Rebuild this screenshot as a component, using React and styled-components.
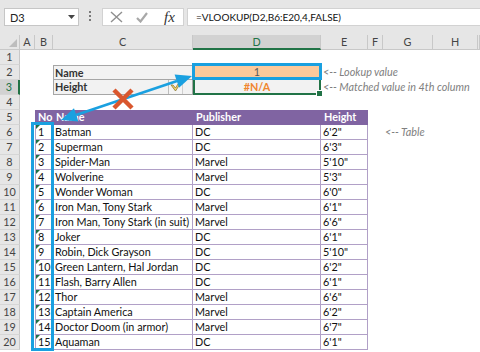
import React from 'react';
import styled, { createGlobalStyle } from 'styled-components';

const Global = createGlobalStyle`
  html, body { margin: 0; padding: 0; background: #fff; }
  body { font-family: Lato, "Liberation Sans", sans-serif; }
`;

const Root = styled.div`
  position: relative;
  width: 480px;
  height: 352px;
  overflow: hidden;
  background: #fff;
  font-family: Lato, "Liberation Sans", sans-serif;
`;

const FormulaBar = styled.div`
  height: 35px;
  box-sizing: border-box;
  padding: 8px 0 0 4px;
  background: #e6e6e6;
  display: flex;
  align-items: flex-start;
`;

const NameBox = styled.div`
  width: 75px;
  height: 18px;
  box-sizing: border-box;
  background: #fff;
  border: 1px solid #c6c6c6;
  display: flex;
  align-items: center;
  justify-content: space-between;
  padding: 0 3px 0 5px;
  font-size: 11px;
  color: #222;
`;

const Dots = styled.div`
  width: 3px;
  margin: 3px 10px 0 10px;
  display: flex;
  flex-direction: column;
  gap: 2px;
  span {
    width: 2px;
    height: 2px;
    background: #7a7a7a;
  }
`;

const IconBox = styled.div`
  width: 82px;
  height: 18px;
  box-sizing: border-box;
  background: #fff;
  border: 1px solid #d2d2d2;
  display: flex;
  align-items: center;
  padding-left: 7px;
  gap: 13px;
`;

const Fx = styled.span`
  font-family: "Liberation Serif", serif;
  font-style: italic;
  font-size: 15px;
  color: #333;
  margin-left: 3px;
  line-height: 16px;
`;

const FormulaInput = styled.div`
  flex: 1;
  height: 18px;
  margin-left: 3px;
  box-sizing: border-box;
  background: #fff;
  border: 1px solid #d2d2d2;
  border-right: none;
  font-size: 10px;
  color: #111;
  padding-left: 8px;
  line-height: 16px;
  white-space: nowrap;
`;

const Sheet = styled.div`
  display: grid;
  grid-template-columns: 20px 15px 18px 140px 128px 47px 15px 50px 45px 1fr;
  grid-template-rows: repeat(21, 15px);
  font-size: 10.8px;
`;

const Corner = styled.div`
  grid-row: 1;
  grid-column: 1;
  background: #e6e6e6;
  border-right: 1px solid #c8c8c8;
  border-bottom: 1px solid #c8c8c8;
  box-sizing: border-box;
  display: flex;
  align-items: flex-end;
  justify-content: flex-end;
  padding: 0 2px 2px 0;
`;

const ColHead = styled.div`
  grid-row: 1;
  grid-column: ${(p) => p.$col};
  background: ${(p) => (p.$active ? '#d2d2d2' : '#e6e6e6')};
  color: ${(p) => (p.$active ? '#217346' : '#444')};
  border-right: 1px solid #c8c8c8;
  border-bottom: ${(p) => (p.$active ? '2px solid #217346' : '1px solid #c8c8c8')};
  box-sizing: border-box;
  text-align: center;
  line-height: 14px;
`;

const RowHead = styled.div`
  grid-row: ${(p) => p.$row + 1};
  grid-column: 1;
  background: ${(p) => (p.$active ? '#d2d2d2' : '#e6e6e6')};
  color: ${(p) => (p.$active ? '#217346' : '#444')};
  border-right: ${(p) => (p.$active ? '2px solid #217346' : '1px solid #c8c8c8')};
  border-bottom: 1px solid #d6d6d6;
  box-sizing: border-box;
  text-align: center;
  line-height: 14px;
`;

const LabelCell = styled.div`
  position: relative;
  grid-row: ${(p) => p.$row + 1};
  grid-column: 4;
  background: #f2f2f2;
  border: 1px solid #a6a6a6;
  border-top: ${(p) => (p.$first ? '1px solid #a6a6a6' : 'none')};
  box-sizing: border-box;
  font-weight: bold;
  color: #333;
  padding-left: 1px;
  line-height: 13px;
`;

const SmartTag = styled.div`
  position: absolute;
  left: 114px;
  top: 0;
  width: 15px;
  height: 14px;
  box-sizing: border-box;
  background: #f4f4f4;
  border-left: 1px solid #bdbdbd;
  border-right: 1px solid #cfcfcf;
  display: flex;
  align-items: center;
  justify-content: center;
`;

const LookupCell = styled.div`
  grid-row: 3;
  grid-column: 5;
  background: #fcc99b;
  color: #595959;
  text-align: center;
  line-height: 14px;
`;

const ResultCell = styled.div`
  position: relative;
  grid-row: 4;
  grid-column: 5;
  background: #f2f2f2;
  border: 2px solid #217346;
  border-top: none;
  box-sizing: border-box;
  color: #f0862e;
  font-weight: bold;
  text-align: center;
  line-height: 13px;
  &::after {
    content: '';
    position: absolute;
    right: -4px;
    bottom: -4px;
    width: 5px;
    height: 5px;
    background: #217346;
    border: 1px solid #fff;
  }
`;

const Note = styled.div`
  grid-row: ${(p) => p.$row + 1};
  grid-column: ${(p) => p.$col} / -1;
  font-style: italic;
  color: #808080;
  white-space: nowrap;
  padding-left: 2px;
  line-height: 14px;
`;

const THead = styled.div`
  grid-row: 6;
  grid-column: ${(p) => p.$col};
  background: #8064a2;
  color: #fff;
  font-weight: bold;
  padding-left: 3px;
  line-height: 14px;
  white-space: nowrap;
`;

const TCell = styled.div`
  position: relative;
  grid-row: ${(p) => p.$row + 1};
  grid-column: ${(p) => p.$col};
  background: #fff;
  color: #111;
  border-bottom: 1px solid #b1a0c7;
  border-right: 1px solid #b1a0c7;
  border-left: ${(p) => (p.$first ? '1px solid #b1a0c7' : 'none')};
  box-sizing: border-box;
  padding-left: 2px;
  line-height: 13px;
  white-space: nowrap;
  ${(p) =>
    p.$flag &&
    `&::before {
      content: '';
      position: absolute;
      left: 0;
      top: 0;
      border-top: 4px solid #1e7145;
      border-right: 4px solid transparent;
    }`}
`;

const Overlay = styled.svg`
  position: absolute;
  left: 0;
  top: 0;
  pointer-events: none;
`;

const heroes = [
  ['Batman', 'DC', `6'2"`],
  ['Superman', 'DC', `6'3"`],
  ['Spider-Man', 'Marvel', `5'10"`],
  ['Wolverine', 'Marvel', `5'3"`],
  ['Wonder Woman', 'DC', `6'0"`],
  ['Iron Man, Tony Stark', 'Marvel', `6'1"`],
  ['Iron Man, Tony Stark (in suit)', 'Marvel', `6'6"`],
  ['Joker', 'DC', `6'1"`],
  ['Robin, Dick Grayson', 'DC', `5'10"`],
  ['Green Lantern, Hal Jordan', 'DC', `6'2"`],
  ['Flash, Barry Allen', 'DC', `6'1"`],
  ['Thor', 'Marvel', `6'6"`],
  ['Captain America', 'Marvel', `6'2"`],
  ['Doctor Doom (in armor)', 'Marvel', `6'7"`],
  ['Aquaman', 'DC', `6'1"`],
];

const columns = ['A', 'B', 'C', 'D', 'E', 'F', 'G', 'H'];

export default function App() {
  return (
    <Root>
      <Global />
      <FormulaBar>
        <NameBox>
          <span>D3</span>
          <svg width="7" height="4" viewBox="0 0 7 4">
            <path d="M0 0 L7 0 L3.5 4 Z" fill="#444" />
          </svg>
        </NameBox>
        <Dots>
          <span />
          <span />
          <span />
        </Dots>
        <IconBox>
          <svg width="13" height="12" viewBox="0 0 13 12">
            <path d="M1 1 L12 11 M12 1 L1 11" stroke="#8f8f8f" strokeWidth="1.4" fill="none" />
          </svg>
          <svg width="12" height="11" viewBox="0 0 12 11">
            <path d="M1 6 L4.5 9.5 L11 1" stroke="#a8a8a8" strokeWidth="2.2" fill="none" />
          </svg>
          <Fx>fx</Fx>
        </IconBox>
        <FormulaInput>=VLOOKUP(D2,B6:E20,4,FALSE)</FormulaInput>
      </FormulaBar>

      <Sheet>
        <Corner>
          <svg width="8" height="8" viewBox="0 0 8 8">
            <path d="M8 0 L8 8 L0 8 Z" fill="#bdbdbd" />
          </svg>
        </Corner>
        {columns.map((c, i) => (
          <ColHead key={c} $col={i + 2} $active={c === 'D'}>
            {c}
          </ColHead>
        ))}
        <ColHead $col={10} />
        {Array.from({ length: 20 }, (_, i) => (
          <RowHead key={i} $row={i + 1} $active={i + 1 === 3}>
            {i + 1}
          </RowHead>
        ))}

        <LabelCell $row={2} $first>
          Name
        </LabelCell>
        <LookupCell>1</LookupCell>
        <Note $row={2} $col={6}>
          {'<-- Lookup value'}
        </Note>

        <LabelCell $row={3}>
          Height
          <SmartTag>
            <svg width="11" height="9" viewBox="0 0 11 9">
              <path d="M1 2 L5.5 8 L10 1 L8 1 L5.5 5 L3 2 Z" fill="#f3d36a" stroke="#8a7a3a" strokeWidth="0.8" />
            </svg>
          </SmartTag>
        </LabelCell>
        <ResultCell>#N/A</ResultCell>
        <Note $row={3} $col={6}>
          {'<-- Matched value in 4th column'}
        </Note>

        <THead $col={3}>No</THead>
        <THead $col={4}>Name</THead>
        <THead $col={5}>Publisher</THead>
        <THead $col={6}>Height</THead>

        {heroes.map(([name, pub, height], i) => (
          <React.Fragment key={name}>
            <TCell $row={i + 6} $col={3} $first $flag>
              {i + 1}
            </TCell>
            <TCell $row={i + 6} $col={4}>
              {name}
            </TCell>
            <TCell $row={i + 6} $col={5}>
              {pub}
            </TCell>
            <TCell $row={i + 6} $col={6}>
              {height}
            </TCell>
          </React.Fragment>
        ))}
        <Note $row={6} $col={8}>
          {'<-- Table'}
        </Note>
      </Sheet>

      <Overlay width="480" height="352" viewBox="0 0 480 352">
        <rect x="32.5" y="123.5" width="20" height="226" fill="none" stroke="#1aa0e0" strokeWidth="3" />
        <rect x="193.5" y="64.5" width="127" height="14" fill="none" stroke="#1aa0e0" strokeWidth="3" />
        <line x1="76" y1="115" x2="177" y2="81" stroke="#1aa0e0" strokeWidth="2.6" />
        <polygon points="192,76 179,87.7 174.6,74.5" fill="#1aa0e0" />
        <polygon points="61,120 78.4,121.5 74,108.3" fill="#1aa0e0" />
        <path d="M114 90 L132 108 M132 90 L114 108" stroke="#d9572e" strokeWidth="4.5" fill="none" />
      </Overlay>
    </Root>
  );
}
